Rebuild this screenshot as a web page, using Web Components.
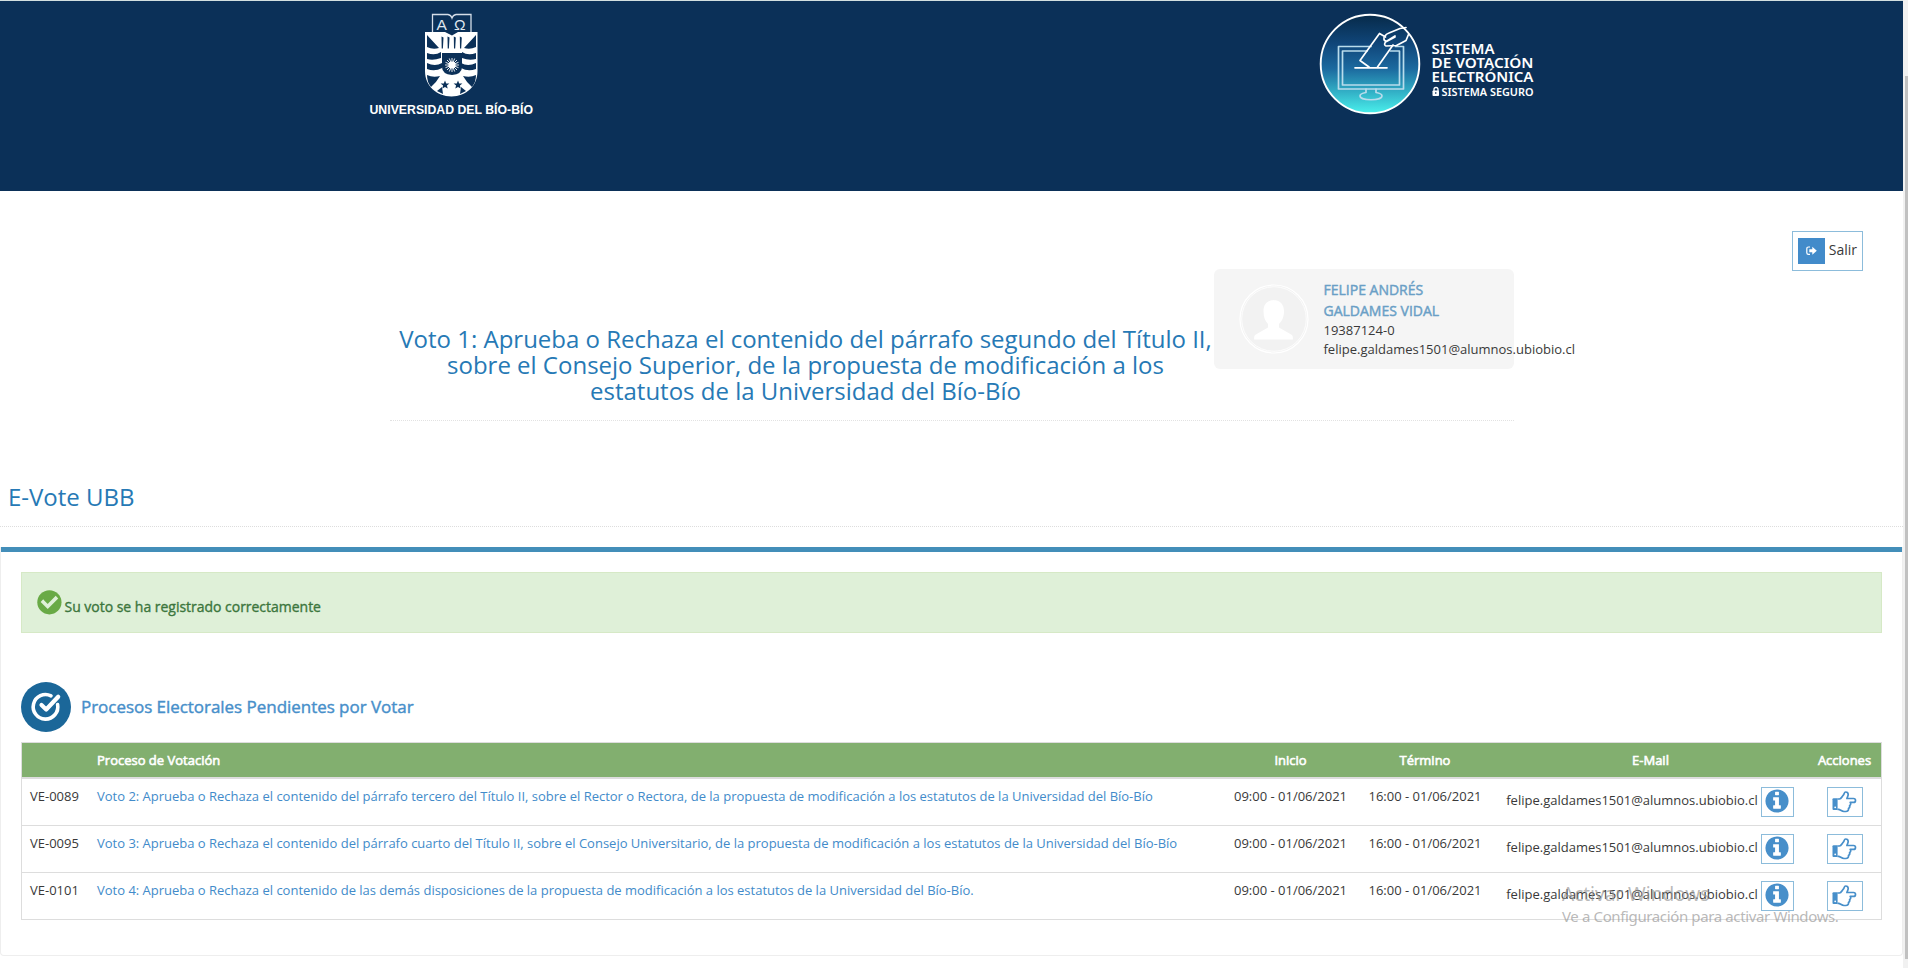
<!DOCTYPE html>
<html lang="es">
<head>
<meta charset="utf-8">
<title>E-Vote UBB</title>
<style>
html,body{margin:0;height:968px;overflow:hidden;background:#fff}
body{font:13px/19.5px "Open Sans",sans-serif;color:#393939}
</style>
</head>
<body>
<vote-app></vote-app>
<script>
const define = (name, html, setup) => customElements.define(name, class extends HTMLElement {
  constructor() {
    super();
    const t = document.createElement('template');
    t.innerHTML = html;
    this.attachShadow({mode: 'open'}).append(t.content.cloneNode(true));
    if (setup) setup(this, this.shadowRoot);
  }
});

define('ubb-logo', `
<style>:host{display:block;width:168px;height:110px}svg{display:block}text{font-family:"Liberation Sans",sans-serif;fill:#fff}</style>
<svg width="168" height="110" viewBox="368 10 168 110">
  <path d="M432.500 33V14.500H448q3 .5 4 3.500 1-3 4-3.500h15v18.500" fill="none" stroke="#d5dde8" stroke-width="1.300"/>
  <text x="436.500" y="30" style="font-size:15.500px;fill:#dfe6ee">A</text>
  <text x="454" y="30" style="font-size:15.500px;fill:#dfe6ee">Ω</text>
  <path d="M425 32H445l7 3.500 6-3.500h19.500v39c0 15-11 25-26 25.500-15-.5-26.500-10.500-26.500-25.500z" fill="#fff"/>
  <g fill="#0b3058">
    <path d="M427 35l12 13q-6 2-12-1zM476 35l-12 13q6 2 12-1z"/>
    <path d="M427 53q8 3 14-1v6q-8 3-14 1zM462 52q6 4 14 1v6q-7 2-14-1z"/>
    <path d="M427 63q8 4 15 0v5q-7 4-15 1zM461 63q7 4 15 0v6q-8 3-15-1z"/>
    <path d="M427 75q6 3 13 1-4 7-9 11-4-5-4-12zM476 75q-6 3-13 1 4 7 9 11 4-5 4-12z"/>
    <path d="M437 91l5-4 1 7zM466 91l-5-4-1 7z"/>
    <path d="M442 53h20v14q0 7-10 8-10-1-10-8z"/>
    <path d="M445 80.500l1.200 2.900 3.200.2-2.500 2 .8 3-2.700-1.700-2.700 1.700.8-3-2.500-2 3.200-.2zM458 80.500l1.200 2.900 3.200.2-2.500 2 .8 3-2.700-1.700-2.700 1.700.8-3-2.500-2 3.200-.2z"/>
    <path d="M441.500 36.500l2 1-.6 11h-1.200zM447.500 36.500l2 1-.6 11h-1.200zM453.800 36.500l2 1-.6 11H454zM459.800 36.500l2 1-.6 11H460z"/>
  </g>
  <circle cx="452" cy="65" r="3.600" fill="#fff"/>
  <path d="M452 58v14M445 65h14M447 60l10 10M457 60l-10 10M449.300 58.500l5.400 13M454.700 58.500l-5.400 13M445.500 62.300l13 5.400M445.500 67.700l13-5.400" stroke="#fff" stroke-width=".9"/>
  <text x="369.500" y="113.500" textLength="163.500" lengthAdjust="spacingAndGlyphs" style="font-size:12.500px;font-weight:700">UNIVERSIDAD DEL BÍO-BÍO</text>
</svg>`);

define('system-logo', `
<style>:host{display:block;width:216px;height:102px}svg{display:block}text{font-family:"Noto Sans",sans-serif;font-weight:600;fill:#fff}</style>
<svg width="216" height="102" viewBox="1319 13 216 102">
  <defs><linearGradient id="g" x1="0" y1="0" x2="0" y2="1"><stop offset="0" stop-color="#072a49"/><stop offset=".3" stop-color="#10467a"/><stop offset=".55" stop-color="#1c6a9f"/><stop offset=".8" stop-color="#34b5c9"/><stop offset="1" stop-color="#4af0ec"/></linearGradient></defs>
  <circle cx="1370" cy="64" r="49.300" fill="url(#g)" stroke="#fff" stroke-width="1.900"/>
  <g fill="none" stroke="#b9dcec" stroke-width="1.700" stroke-linejoin="round" stroke-linecap="round">
    <path d="M1371 46.500h-32.500V89h65V46.500h-8"/>
    <path d="M1367 51h-24.500v34h57V51h-9"/>
    <path d="M1366 89v3.500q-6 1-6 3.500c0 5 22 5 22 0q0-2.500-6-3.500V89"/>
  </g>
  <g fill="none" stroke="#fff" stroke-width="1.700" stroke-linejoin="round" stroke-linecap="round">
    <path d="M1369 67l-9-6.500 19.500-27 6 3.500M1393 45l-15.500 22M1355 67.800h32"/>
    <path d="M1385 36q1-2 4-3l11-4.500 6-1M1395 37l-9.500 5q-2 3 .5 4l10.500-.5 9.500-5 2.500-6M1384 37.500q-.5 4 3 3.500l8-5"/>
  </g>
  <text x="1431.500" y="54.300" textLength="63" lengthAdjust="spacingAndGlyphs" font-size="14.500">SISTEMA</text>
  <text x="1431.500" y="68.300" textLength="102" lengthAdjust="spacingAndGlyphs" font-size="14.500">DE VOTACIÓN</text>
  <text x="1431.500" y="82" textLength="102" lengthAdjust="spacingAndGlyphs" font-size="14.500">ELECTRÓNICA</text>
  <path d="M1434 91v-1.500a2 2 0 0 1 4 0V91" fill="none" stroke="#fff" stroke-width="1.300"/>
  <rect x="1432.500" y="90.500" width="6.500" height="5.500" rx=".8" fill="#fff"/><rect x="1435.300" y="92" width="1" height="2" fill="#0b3058"/>
  <text x="1441.500" y="96" textLength="92" lengthAdjust="spacingAndGlyphs" font-size="10.500">SISTEMA SEGURO</text>
</svg>`);

define('site-banner', `
<style>:host{display:flex;box-sizing:border-box;height:191px;background:#0b3058;border-top:1px solid #d3dfe0;padding:9px 0 0 368px;align-items:flex-start}
system-logo{margin:3px 0 0 783px}</style>
<ubb-logo></ubb-logo><system-logo></system-logo>`);

define('exit-button', `
<style>:host{display:flex;box-sizing:border-box;width:71px;height:40px;border:1px solid #8cbcdb;padding:6px 5px;gap:4px;font-size:14px;line-height:21px}
i{display:flex;align-items:center;justify-content:center;width:27px;height:26px;background:#428bca}span{margin-top:1px}</style>
<i><svg width="11" height="10" viewBox="0 0 11 10"><path d="M4 1H2.500Q.8 1 .8 2.700v4q0 1.700 1.700 1.700H4" fill="none" stroke="#fff" stroke-width="1.200"/><path d="M3.300 3.300h3V.8L10.800 4.800 6.300 8.800V6.300h-3z" fill="#fff"/></svg></i><span>Salir</span>`);

define('user-card', `
<style>:host{display:block;box-sizing:border-box;width:300px;height:100px;background:#f5f5f5;border-radius:6px;padding:10px 0 0 109.5px;white-space:nowrap;position:relative}
svg{position:absolute;left:24px;top:14px}
b{display:block;font-weight:400;-webkit-text-stroke:.45px;font-size:14px;line-height:21px;color:#6a9fc6}div{line-height:19px}</style>
<svg width="72" height="72" viewBox="0 0 72 72"><circle cx="36" cy="36" r="34" fill="#f3f3f3" stroke="#fff" stroke-width="1.200"/><circle cx="36" cy="36" r="32.300" fill="#f2f2f2" stroke="#fff" stroke-width=".8"/><path d="M36 17c-7 0-10.500 4.500-10.500 11 0 6 1.500 10 4.500 13v3.500L17 52q-1 .8-1 4.500h39q0-3.700-1-4.500l-13-7.500V41c3-3 5-7 5-13 0-6.500-4-11-11-11z" fill="#fff"/></svg>
<b>FELIPE ANDRÉS</b><b>GALDAMES VIDAL</b><div>19387124-0</div><div>felipe.galdames1501@alumnos.ubiobio.cl</div>`);

define('vote-title', `
<style>:host{display:flex;box-sizing:border-box;width:1124px;height:152px;margin-left:390px;border-bottom:1px dotted #e2e2e2}
h1{box-sizing:border-box;margin:0;padding-top:57px;width:824px;padding-left:7px;text-align:center;white-space:nowrap;font-size:24px;line-height:26px;font-weight:400;color:#2679b5}</style>
<h1>Voto 1: Aprueba o Rechaza el contenido del párrafo segundo del Título II,<br>sobre el Consejo Superior, de la propuesta de modificación a los<br>estatutos de la Universidad del Bío-Bío</h1><user-card></user-card>`);

define('success-alert', `
<style>:host{display:flex;box-sizing:border-box;height:61px;background:#dff0d8;border:1px solid #d6e9c6;padding:16px 15px;color:#3c763d;font-size:14px;line-height:21px}
svg{margin-right:2.5px;margin-top:1px}span{-webkit-text-stroke:.35px;margin-top:7px;letter-spacing:-.02px}</style>
<svg width="25" height="25" viewBox="0 0 25 25"><circle cx="12.400" cy="12.300" r="12.100" fill="#69aa46"/><path d="M6.200 12.500l4.500 4.500 8-8" fill="none" stroke="#dff0d8" stroke-width="3.600" stroke-linecap="square" stroke-linejoin="miter" transform="translate(0 -.6)"/></svg>
<span><slot></slot></span>`);

define('section-title', `
<style>:host{display:flex;align-items:center;height:50px;gap:10px;color:#478fca;font-size:17px;letter-spacing:-.04px}span{-webkit-text-stroke:.4px}</style>
<svg width="50" height="50" viewBox="0 0 50 50"><circle cx="25" cy="25" r="25" fill="#1b6799"/><path d="M30 13.800A12.300 12.300 0 1 0 36.600 22.500" fill="none" stroke="#fff" stroke-width="3.600" stroke-linecap="round"/><path d="M20.500 23l4.700 4.500L37.200 14.700" fill="none" stroke="#fff" stroke-width="4.200" stroke-linecap="round" stroke-linejoin="round"/></svg>
<span><slot></slot></span>`);

define('icon-button', `
<style>:host{display:flex;box-sizing:border-box;width:33px;height:30px;border:1px solid #8cbcdb;align-items:center;justify-content:center}:host([kind=hand]){width:36px}
svg{display:none}:host([kind=info]) .info,:host([kind=hand]) .hand{display:block}</style>
<svg class="info" width="24" height="24" viewBox="100 100 1592 1592" style="margin-top:-2px"><path fill="#478fca" d="M1152 1376v-160q0-14-9-23t-23-9h-96v-512q0-14-9-23t-23-9h-320q-14 0-23 9t-9 23v160q0 14 9 23t23 9h96v320h-96q-14 0-23 9t-9 23v160q0 14 9 23t23 9h448q14 0 23-9t9-23zm-128-896v-160q0-14-9-23t-23-9h-192q-14 0-23 9t-9 23v160q0 14 9 23t23 9h192q14 0 23-9t9-23zm640 416q0 209-103 385.500t-279.500 279.500-385.500 103-385.500-103-279.500-279.500-103-385.500 103-385.500 279.500-279.500 385.500-103 385.500 103 279.500 279.500 103 385.500z"/></svg>
<svg class="hand" width="25" height="22" viewBox="0 0 25 22" style="margin-top:-1px"><path d="M1.600 7.200H5.600V19H1.600Q.5 19 .5 17.900V8.300Q.5 7.200 1.600 7.200z" fill="#478fca"/><circle cx="3.200" cy="16.300" r=".9" fill="#fff"/><path d="M5.500 8H7.500C9.300 8 10 5.500 11.300 4.200 12.500 3 12 1 13.600 1c2 0 2.600 1 2.600 2.600 0 1.600-1.200 2.800-1.300 3.900H21.500c1.200 0 2 .9 2 1.900s-.8 2-2 2H18.200c.9 1 .6 2.600-.6 3.200.4 1.200-.1 2.300-1.100 2.800.3 1.900-.8 3.100-2.700 3.100H12C9.800 20.500 8.200 18.500 6.600 18.300H5.500" fill="none" stroke="#478fca" stroke-width="1.700" stroke-linejoin="round"/></svg>`);

define('process-row', `
<style>:host{display:grid;grid-template-columns:67px 1135px 133px 136px 315px 73px;height:46px;border-top:1px solid #ddd;white-space:nowrap}
div{padding-top:8px;text-align:center}.l{text-align:left;padding-left:8px}a{color:#428bca;letter-spacing:-.005px}
.mail{display:flex;justify-content:center;gap:3px;margin-left:-1px}.mail span{margin-top:4px}.act{display:flex;justify-content:center}
:host([first]) {border-top:0;height:46px}</style>
<div class="l"><slot name="id"></slot></div><div class="l"><a><slot></slot></a></div><div><slot name="start"></slot></div><div>16:00 - 01/06/2021</div>
<div class="mail"><span>felipe.galdames1501@alumnos.ubiobio.cl</span><icon-button kind="info"></icon-button></div><div class="act"><icon-button kind="hand"></icon-button></div>`);

define('process-table', `
<style>:host{display:block;border:1px solid #ddd;margin-top:10px}
header{display:grid;grid-template-columns:67px 1135px 133px 136px 315px 73px;height:34px;line-height:35px;background:#82af6f;color:#fff;border-bottom:2px solid #ddd;text-align:center;-webkit-text-stroke:.6px}
.l{text-align:left;padding-left:8px}</style>
<header><span></span><span class="l">Proceso de Votación</span><span>Inicio</span><span>Término</span><span>E-Mail</span><span>Acciones</span></header>
<slot></slot>`);

define('windows-notice', `
<style>:host{position:absolute;left:1562px;top:881px;font-family:"Noto Sans",sans-serif;color:rgba(150,150,150,.68);white-space:nowrap}
div{font-size:19px;line-height:26px}p{margin:0;font-size:15px;line-height:19px;letter-spacing:-.37px}</style>
<div>Activar Windows</div><p>Ve a Configuración para activar Windows.</p>`);

define('page-scrollbar', `
<style>:host{display:block;box-sizing:border-box;width:5px;height:968px;background:#f1f1f1;padding:76px 0 0 2px}i{display:block;height:883px;background:#c1c1c1}</style><i></i>`);

define('vote-app', `
<style>:host{display:flex;width:1908px;height:968px}
main{width:1903px}exit-button{margin:40px 0 0 1792px}vote-title{margin-top:-2px}
h2{margin:0;height:106px;box-sizing:border-box;padding:59px 0 0 8px;border-bottom:1px dotted #ddd;font-weight:400;font-size:24px;line-height:34px;color:#2679b5}
.box{box-sizing:border-box;height:409px;margin-top:20px;border:1px solid #eee;border-top:0;border-radius:0 0 4px 4px;padding:0 20px}
.bar{height:5px;margin:0 -20px 20px;background:#438eb9}section-title{margin-top:49px}</style>
<main>
<site-banner></site-banner><exit-button></exit-button><vote-title></vote-title>
<h2>E-Vote UBB</h2>
<section class="box"><div class="bar"></div>
<success-alert>Su voto se ha registrado correctamente</success-alert>
<section-title>Procesos Electorales Pendientes por Votar</section-title>
<process-table>
<process-row first><span slot="id">VE-0089</span>Voto 2: Aprueba o Rechaza el contenido del párrafo tercero del Título II, sobre el Rector o Rectora, de la propuesta de modificación a los estatutos de la Universidad del Bío-Bío<span slot="start">09:00 - 01/06/2021</span></process-row>
<process-row><span slot="id">VE-0095</span>Voto 3: Aprueba o Rechaza el contenido del párrafo cuarto del Título II, sobre el Consejo Universitario, de la propuesta de modificación a los estatutos de la Universidad del Bío-Bío<span slot="start">09:00 - 01/06/2021</span></process-row>
<process-row><span slot="id">VE-0101</span>Voto 4: Aprueba o Rechaza el contenido de las demás disposiciones de la propuesta de modificación a los estatutos de la Universidad del Bío-Bío.<span slot="start">09:00 - 01/06/2021</span></process-row>
</process-table>
</section>
</main>
<page-scrollbar></page-scrollbar>
<windows-notice></windows-notice>`);
</script>
</body>
</html>
